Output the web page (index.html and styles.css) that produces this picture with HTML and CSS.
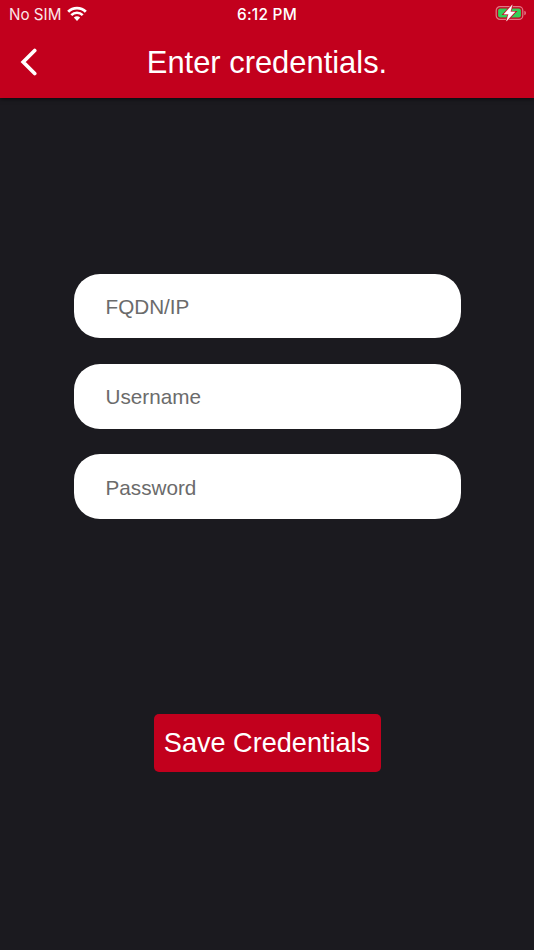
FILE: index.html
```
<!DOCTYPE html>
<html lang="en">
<head>
<meta charset="utf-8">
<title>Enter credentials</title>
<link rel="stylesheet" href="styles.css">
</head>
<body>
<header class="header">
  <div class="status">
    <div class="carrier"><span>No SIM</span>
      <svg class="wifi" viewBox="0 0 20 15" width="20" height="15">
        <path d="M1.2 5.7 A12.6 12.6 0 0 1 18.8 5.7" fill="none" stroke="#fff" stroke-width="2.9"/>
        <path d="M4.3 9.2 A8 8 0 0 1 15.7 9.2" fill="none" stroke="#fff" stroke-width="2.6"/>
        <path d="M6.8 11.6 Q10 8.9 13.2 11.6 L10 14.9Z" fill="#fff"/>
      </svg>
    </div>
    <time class="time">6:12 PM</time>
    <svg class="battery" viewBox="0 0 32 18" width="32" height="18">
      <rect x="1.2" y="2.6" width="26.6" height="12.8" rx="3.8" fill="none" stroke="#e37585" stroke-width="1.2"/>
      <rect x="3.1" y="4.5" width="22.8" height="9" rx="2" fill="#35cf59"/>
      <path d="M29.3 6.8 Q31 7.3 31 9 T29.3 11.2Z" fill="#e37585"/>
      <path d="M17.3 .8 8.7 10.2H13.4L11.4 17.2 20.3 7.8H15.5Z" fill="#c2001d" stroke="#c2001d" stroke-width="1.8"/>
      <path d="M17.3 .8 8.7 10.2H13.4L11.4 17.2 20.3 7.8H15.5Z" fill="#fff" stroke="#fff" stroke-width=".3"/>
    </svg>
  </div>
  <div class="navbar">
    <button class="back" type="button" aria-label="Back">
      <svg viewBox="0 0 18 28" width="18" height="28"><path d="M14.7 2.5 3.2 14 14.7 25.5" fill="none" stroke="#fff" stroke-width="3.7" stroke-linecap="round"/></svg>
    </button>
    <h1 class="title">Enter credentials.</h1>
  </div>
</header>
<form class="form">
  <input class="field" type="text" placeholder="FQDN/IP" aria-label="FQDN/IP">
  <input class="field" type="text" placeholder="Username" aria-label="Username">
  <input class="field" type="password" placeholder="Password" aria-label="Password">
  <button class="save" type="button">Save Credentials</button>
</form>
</body>
</html>
```
FILE: styles.css
```
* { box-sizing: border-box; }
body {
  margin: 0;
  min-height: 950px;
  background: #1b1a1f;
  color: #fff;
  font-family: "Liberation Sans", Arial, sans-serif;
}
.header {
  height: 98px;
  background: #c2001d;
  box-shadow: 0 1px 4px rgba(0, 0, 0, .65);
}
.status {
  display: grid;
  grid-template-columns: 1fr auto 1fr;
  align-items: center;
  height: 28px;
  padding: 0 7px 0 9px;
  font-family: Inter, sans-serif;
  font-size: 15.2px;
}
.carrier { display: flex; align-items: center; gap: 6px; color: #fbe5e8; }
.wifi { margin-top: -2px; }
.time { margin-right: 2px; font-weight: 500; font-size: 15.4px; letter-spacing: .25px; }
.battery { justify-self: end; margin-top: -2px; }
.navbar {
  display: grid;
  grid-template-columns: 60px 1fr 60px;
  align-items: center;
  height: 70px;
}
.back {
  display: flex;
  padding: 0 0 0 20px;
  margin-top: -2px;
  border: 0;
  background: none;
}
.title {
  margin: 0;
  text-align: center;
  font-size: 30.9px;
  font-weight: 400;
  line-height: 36px;
}
.form {
  display: flex;
  flex-direction: column;
  align-items: center;
  gap: 25.8px;
  padding-top: 175.8px;
}
.field {
  width: 387px;
  height: 64.5px;
  padding: 2px 32px 0;
  border: 0;
  border-radius: 26px;
  background: #fff;
  color: #222;
  font: 20.7px "Liberation Sans", Arial, sans-serif;
}
.field::placeholder { color: #6b6b6b; opacity: 1; }
.save {
  width: 227px;
  height: 58px;
  margin-top: 169.3px;
  padding: 0;
  border: 0;
  border-radius: 5px;
  background: #c2001d;
  color: #fff;
  font: 27.1px "Liberation Sans", Arial, sans-serif;
}
```
